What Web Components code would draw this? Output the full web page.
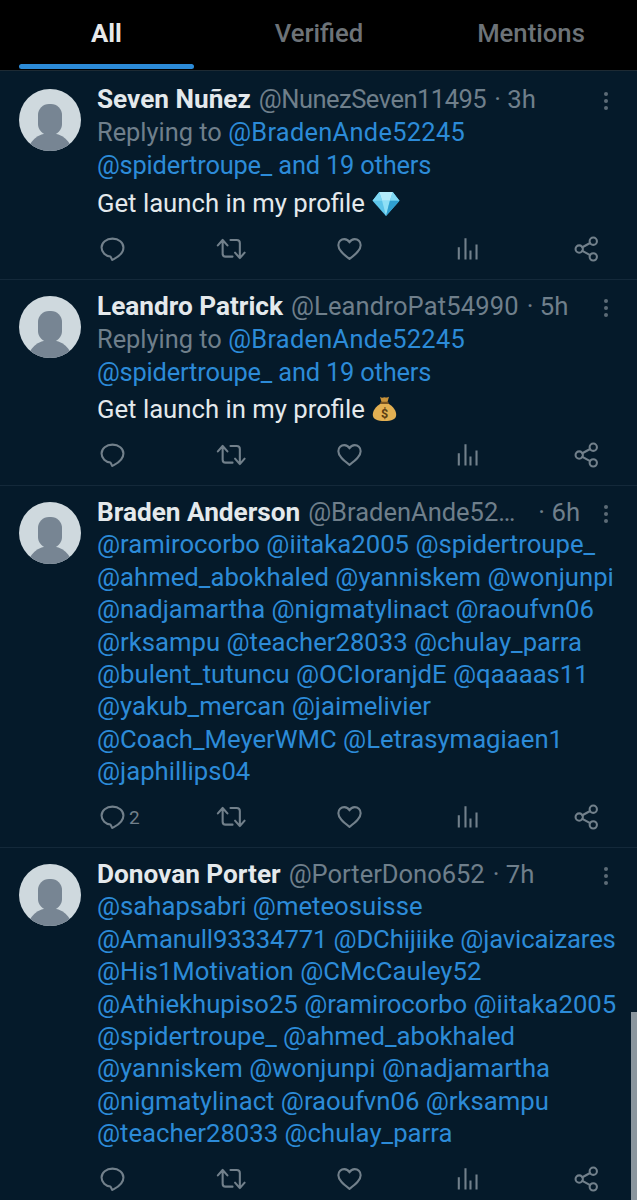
<!DOCTYPE html>
<html>
<head>
<meta charset="utf-8">
<style>
  html, body { margin: 0; background: #051a2a; }
  body { font-family: Roboto, "Liberation Sans", sans-serif; height: 1200px; overflow: hidden; position: relative; }
</style>
</head>
<body>
<x-tabs></x-tabs>
<x-tweet name="Seven Nuñez" handle="@NunezSeven11495" time="3h" style="--handle-ls:-.5px">
  <x-replying>Replying to <x-at style="letter-spacing:.3px">@BradenAnde52245</x-at><br><x-at style="letter-spacing:-.18px">@spidertroupe_ and 19 others</x-at></x-replying>
  <x-body>Get launch in my profile <x-emoji kind="gem"></x-emoji></x-body>
</x-tweet>
<x-tweet name="Leandro Patrick" handle="@LeandroPat54990" time="5h" style="--handle-ls:.15px">
  <x-replying>Replying to <x-at style="letter-spacing:.3px">@BradenAnde52245</x-at><br><x-at style="letter-spacing:-.18px">@spidertroupe_ and 19 others</x-at></x-replying>
  <x-body>Get launch in my profile <x-emoji kind="bag"></x-emoji></x-body>
</x-tweet>
<x-tweet name="Braden Anderson" handle="@BradenAnde52…" time="6h" replies="2" style="--time-ml:15px">
  <x-at>@ramirocorbo @iitaka2005 @spidertroupe_<br>@ahmed_abokhaled @yanniskem @wonjunpi<br>@nadjamartha @nigmatylinact @raoufvn06<br>@rksampu @teacher28033 @chulay_parra<br>@bulent_tutuncu @OCIoranjdE @qaaaas11<br>@yakub_mercan @jaimelivier<br>@Coach_MeyerWMC @Letrasymagiaen1<br>@japhillips04</x-at>
</x-tweet>
<x-tweet name="Donovan Porter" handle="@PorterDono652" time="7h">
  <x-at>@sahapsabri @meteosuisse<br><x-at style="letter-spacing:-.15px">@Amanull93334771 @DChijiike @javicaizares</x-at><br>@His1Motivation @CMcCauley52<br>@Athiekhupiso25 @ramirocorbo @iitaka2005<br>@spidertroupe_ @ahmed_abokhaled<br>@yanniskem @wonjunpi @nadjamartha<br>@nigmatylinact @raoufvn06 @rksampu<br>@teacher28033 @chulay_parra</x-at>
</x-tweet>
<x-scrollbar></x-scrollbar>

<script>
// small helper, every element below is just a template + open shadow root
function makeTemplate(html) {
  const t = document.createElement('template');
  t.innerHTML = html;
  return t;
}

class Simple extends HTMLElement {
  constructor() {
    super();
    this.attachShadow({ mode: 'open' });
    this.shadowRoot.appendChild(this.constructor.template.content.cloneNode(true));
  }
}

class XAt extends Simple {
  static template = makeTemplate(`<style>:host { color: #2c8bd8; }</style><slot></slot>`);
}

class XReplying extends Simple {
  static template = makeTemplate(`<style>:host { display: block; color: #6f7f8b; font-size: 25.4px; line-height: 33px; margin-top: 1px; }</style><slot></slot>`);
}

class XBody extends Simple {
  static template = makeTemplate(`<style>:host { display: block; color: #e4e9ec; margin-top: 4.500px; height: 32.400px; }</style><slot></slot>`);
}

class XEmoji extends HTMLElement {
  constructor() {
    super();
    this.attachShadow({ mode: 'open' });
  }
  connectedCallback() {
    const gem = `<svg viewBox="0 0 30 27" width="30" height="26">
      <path d="M8 1h14l7 9-14 16L1 10z" fill="#5cc4ea"/>
      <path d="M8 1h14l-3 9h-8z" fill="#b4ecfb"/>
      <path d="M8 1l3 9H1zM22 1l-3 9h10z" fill="#7fd8f4"/>
      <path d="M11 10h8l-4 16z" fill="#8fdff6"/>
      <path d="M19 10h10L15 26z" fill="#2f9fd0"/>
    </svg>`;
    const bag = `<svg viewBox="0 0 30 30" width="27" height="29">
      <path d="M10 2c2 1.500 3 1 5 .4 2 .6 3.500 .8 5-.4l-2 7h-6z" fill="#c9933a"/>
      <path d="M11.500 9C5 13 2 18 2 22c0 5 5 7 13 7s13-2 13-7c0-4-3-9-9.500-13z" fill="#e3b052"/>
      <rect x="10.500" y="7.500" width="9" height="2.500" rx="1" fill="#7a5420"/>
      <text x="15" y="25" text-anchor="middle" font-family="Roboto, sans-serif" font-size="14" font-weight="700" fill="#5b3d12">$</text>
    </svg>`;
    this.shadowRoot.innerHTML = `<style>:host { display: inline-block; vertical-align: -5px; line-height: 0; }</style>` +
      (this.getAttribute('kind') === 'gem' ? gem : bag);
  }
}

class XTabs extends Simple {
  static template = makeTemplate(`
    <style>
      :host { display: grid; grid-template-columns: 213px 212px 212px; height: 70px; background: #000; border-bottom: 1px solid #1d2a33; margin-bottom: 2px; }
      div { position: relative; display: flex; align-items: center; justify-content: center; font-size: 25.700px; font-weight: 500; color: #6d7378; padding-bottom: 4px; }
      .on { color: #e7e9ea; font-weight: 700; }
      .on::after { content: ''; position: absolute; left: 19px; width: 175px; bottom: 1px; height: 5px; border-radius: 3px; background: #2c8bd8; }
    </style>
    <div class="on">All</div><div>Verified</div><div>Mentions</div>`);
}

const ICONS = {
  reply: `<path d="M12 2.500C6 2.500 1.500 6.300 1.500 11s4 8.300 8.500 8.700l1.800 3.300c2-1.200 10.700-4.500 10.700-12C22.500 6.300 18 2.500 12 2.500z"/>`,
  retweet: `<path d="M3.500 4v13c0 1.700 1 2.800 2.800 2.800H13M-1.100 9 3.500 3.800 8.100 9M11 3.800h6C19 3.800 20 4.900 20 6.600V21M15.400 16 20 21.200 24.600 16"/>`,
  like: `<path d="M12 22C6 17.500 1.300 13.600 1.300 8.800 1.300 5.500 3.900 3 7 3c2.100 0 3.900 1.100 5 3.100C13.100 4.100 14.900 3 17 3c3.100 0 5.700 2.500 5.700 5.800 0 4.800-4.700 8.700-10.700 13.200z"/>`,
  stats: `<path stroke-linecap="butt" d="M2.700 22.600V10.800M9.100 22.600V2.100M13.900 22.600V14M19.700 22.600V8.200"/>`,
  share: `<circle cx="18.500" cy="5" r="3.500"/><circle cx="5" cy="12.500" r="3.500"/><circle cx="18.500" cy="20" r="3.500"/><path d="M8 10.800 15.500 6.700M8 14.200l7.500 4.100"/>`
};

class XAction extends HTMLElement {
  constructor() {
    super();
    this.attachShadow({ mode: 'open' });
  }
  connectedCallback() {
    const count = this.getAttribute('count') || '';
    this.shadowRoot.innerHTML = `
      <style>
        :host { display: flex; align-items: center; gap: 4px; color: #72808b; font-size: 19px; line-height: 1; }
        span { position: relative; top: 1px; }
        svg { width: 25px; height: 25px; fill: none; stroke: currentColor; stroke-width: 2; stroke-linejoin: round; stroke-linecap: round; display: block; overflow: visible; }
      </style>
      <svg viewBox="0 0 24 24">${ICONS[this.getAttribute('icon')]}</svg>${count ? `<span>${count}</span>` : ''}`;
  }
}

class XTweet extends HTMLElement {
  constructor() {
    super();
    this.attachShadow({ mode: 'open' });
  }
  connectedCallback() {
    const name = this.getAttribute('name');
    const handle = this.getAttribute('handle');
    const time = this.getAttribute('time');
    const replies = this.getAttribute('replies') || '';
    this.shadowRoot.innerHTML = `
      <style>
        :host { display: grid; grid-template-columns: 62px 1fr; column-gap: 16px; padding: 10px 29px 18px 19px; border-bottom: 1px solid #14293a; font-size: 25.700px; line-height: 32.400px; color: #e4e9ec; white-space: nowrap; }
        .avatar { width: 62px; height: 62px; margin-top: 6.250px; border-radius: 50%; overflow: hidden; }
        .avatar svg { display: block; }
        .main { min-width: 0; }
        .head { display: flex; align-items: center; gap: 8px; height: 32.400px; }
        b { font-weight: 700; font-size: 26.200px; flex: none; }
        .handle { color: #6f7f8b; font-size: 25.500px; letter-spacing: var(--handle-ls, 0); flex: none; }
        .time { color: #6f7f8b; flex: none; margin-left: var(--time-ml, 0); }
        .dots { margin-left: auto; flex: none; display: grid; gap: 3px; position: relative; top: 2px; }
        .dots i { display: block; width: 4px; height: 4px; border-radius: 50%; background: #5d6b76; }
        .actions { display: grid; grid-template-columns: repeat(4, 118.500px) auto; margin: 16.250px 0 0 3px; height: 25px; }
      </style>
      <div class="avatar">
        <svg viewBox="0 0 62 62" width="62" height="62">
          <rect width="62" height="62" fill="#cfd9de"/>
          <rect x="19" y="15" width="24" height="31" rx="11" fill="#778593"/>
          <ellipse cx="31" cy="64" rx="22" ry="20" fill="#778593"/>
        </svg>
      </div>
      <div class="main">
        <div class="head">
          <b>${name}</b><span class="handle">${handle}</span><span class="time">· ${time}</span>
          <span class="dots"><i></i><i></i><i></i></span>
        </div>
        <slot></slot>
        <div class="actions">
          <x-action icon="reply" count="${replies}"></x-action>
          <x-action icon="retweet"></x-action>
          <x-action icon="like"></x-action>
          <x-action icon="stats"></x-action>
          <x-action icon="share"></x-action>
        </div>
      </div>`;
  }
}

class XScrollbar extends Simple {
  static template = makeTemplate(`<style>:host { position: absolute; right: 0; top: 1012px; width: 6px; height: 188px; background: #8a959d; }</style>`);
}

customElements.define('x-at', XAt);
customElements.define('x-replying', XReplying);
customElements.define('x-body', XBody);
customElements.define('x-emoji', XEmoji);
customElements.define('x-tabs', XTabs);
customElements.define('x-action', XAction);
customElements.define('x-tweet', XTweet);
customElements.define('x-scrollbar', XScrollbar);
</script>
</body>
</html>
